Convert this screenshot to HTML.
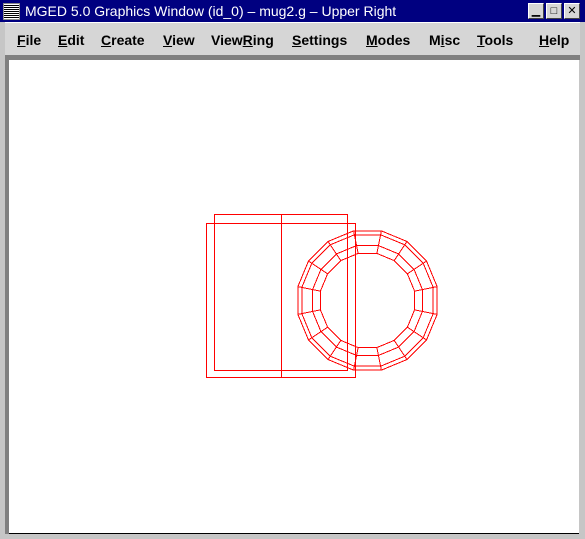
<!DOCTYPE html>
<html><head><style>
body{margin:0;width:585px;height:539px;overflow:hidden;background:#c6c6c6;font-family:"Liberation Sans",sans-serif;position:relative}
.title{position:absolute;left:0;top:0;width:585px;height:22px;background:#000080;color:#fff;font-size:14px}
.title span{position:absolute;left:25px;top:3px}
.menu{position:absolute;left:5px;top:22px;width:575px;height:33px;background:#d6d6d6;border-top:1px solid #fff}
.menu b{position:absolute;top:9px;font-size:14px;font-weight:bold;color:#000}
.btn{position:absolute;top:3px;width:14px;height:14px;background:#d6d6d6;border:1px solid #fff;border-right-color:#444;border-bottom-color:#444;font-size:11px;text-align:center;line-height:14px;color:#000}
</style></head><body>
<div class="title">
<div style="position:absolute;left:3px;top:3px;width:15px;height:15px;background:repeating-linear-gradient(#fff 0 1px,#000 1px 2px);border:1px solid #888"></div>
<span>MGED 5.0 Graphics Window (id_0) – mug2.g – Upper Right</span>
<div class="btn" style="left:528px">▁</div><div class="btn" style="left:546px">□</div><div class="btn" style="left:564px">✕</div>
</div>
<div class="menu">
<b style="left:12px"><u>F</u>ile</b><b style="left:53px"><u>E</u>dit</b><b style="left:96px"><u>C</u>reate</b><b style="left:158px"><u>V</u>iew</b><b style="left:206px">View<u>R</u>ing</b><b style="left:287px"><u>S</u>ettings</b><b style="left:361px"><u>M</u>odes</b><b style="left:424px">M<u>i</u>sc</b><b style="left:472px"><u>T</u>ools</b><b style="left:534px"><u>H</u>elp</b>
</div>
<div style="position:absolute;left:5px;top:55px;width:575px;height:5px;background:#808080"></div>
<div style="position:absolute;left:5px;top:55px;width:4px;height:479px;background:#808080"></div>
<div style="position:absolute;left:9px;top:60px;width:570px;height:473px;background:#fff;border-bottom:1px solid #000"></div>
<svg id="s" width="585" height="539" style="position:absolute;left:0;top:0" shape-rendering="crispEdges">
<g fill="none" stroke="#f00" stroke-width="1">
<rect x="214.5" y="214.5" width="133" height="156"/>
<rect x="206.5" y="223.5" width="149" height="154"/>
<line x1="281.5" y1="214" x2="281.5" y2="378"/>
</g></svg>
<script>
var s=document.getElementById('s'),n=16,cx=367.5,cy=300.5,R=[71,67,56,48],ns='http://www.w3.org/2000/svg',out='';
function p(r,i){var a=(i+0.5)*2*Math.PI/n-Math.PI/2;return [cx+r*Math.cos(a),cy+r*Math.sin(a)];}
R.forEach(function(r){var pts=[];for(var i=0;i<n;i++){pts.push(p(r,i).join(','));}out+='<polygon points="'+pts.join(' ')+'"/>';});
for(var i=0;i<n;i++){var a=p(R[0],i),b=p(R[3],i);out+='<line x1="'+a[0]+'" y1="'+a[1]+'" x2="'+b[0]+'" y2="'+b[1]+'"/>';}
var g=document.createElementNS(ns,'g');g.setAttribute('fill','none');g.setAttribute('stroke','#f00');g.innerHTML=out;s.appendChild(g);
</script>
</body></html>
